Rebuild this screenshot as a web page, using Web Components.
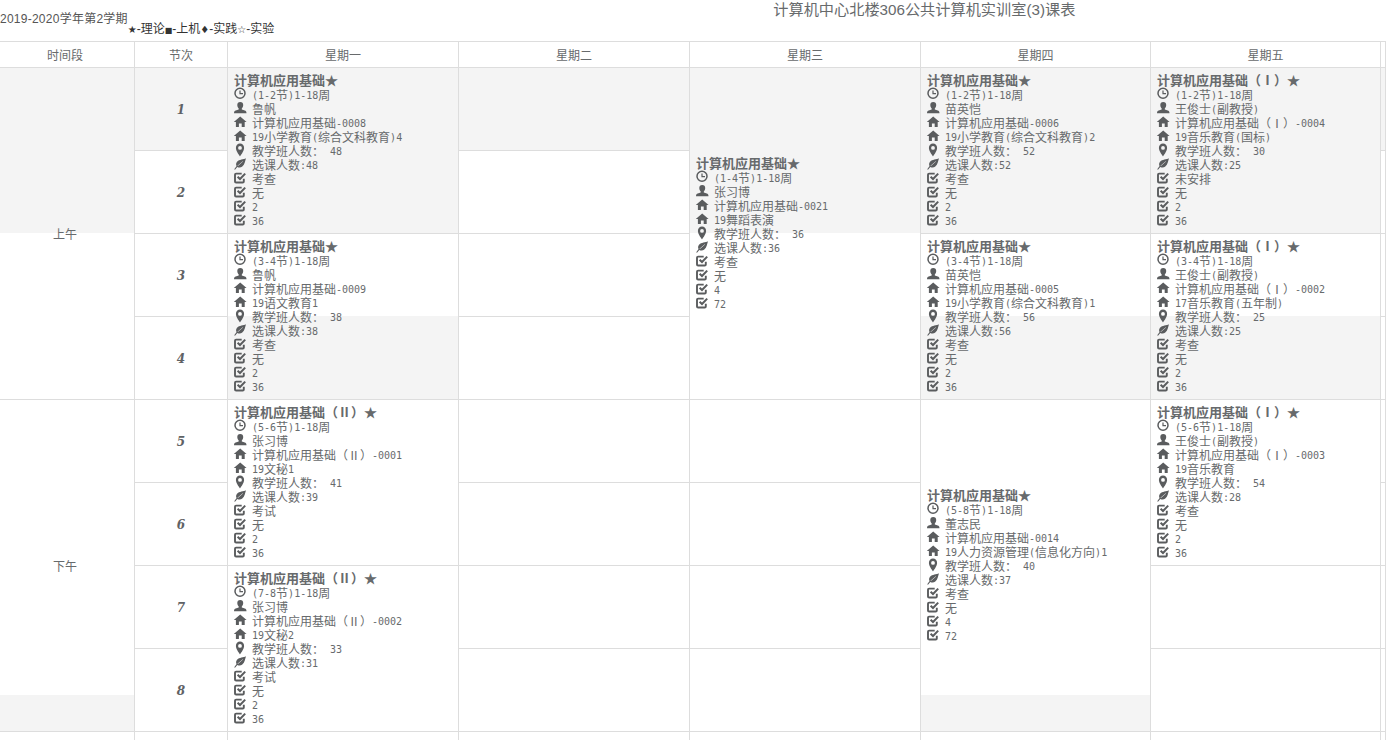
<!DOCTYPE html>
<html lang="zh">
<head>
<meta charset="utf-8">
<title>课表</title>
<style>
  html, body { margin: 0; height: 100%; overflow: hidden; background: #fff; }
</style>
</head>
<body>
<tt-page></tt-page>
<script>
const ICONS = {
  time: `<circle cx="6" cy="5.300" r="5" fill="none" stroke="currentColor" stroke-width="1.500"/><path d="M6 2.400v3.200h3" fill="none" stroke="currentColor" stroke-width="1.200"/>`,
  user: `<path d="M6.200 0c2 0 3 1.300 3 3.100 0 1.400-.6 2.700-1.400 3.400v.9l3 1.200c.9.4 1.700 1 1.700 2.600H0c0-1.600.8-2.200 1.700-2.600l3-1.200v-.9C3.900 5.800 3.300 4.500 3.300 3.100 3.300 1.300 4.300 0 6.200 0z"/>`,
  home: `<path d="M6.200 .4 12.600 6.100H10.700V11H7.700V7.400H4.900V11H1.900V6.100H-.2z"/>`,
  marker: `<path fill-rule="evenodd" d="M6 -.4a4.100 4.100 0 0 0-4.100 4.300C1.900 7.200 6 12.300 6 12.300s4.100-5.100 4.100-8.400A4.100 4.100 0 0 0 6 -.4zm0 6.200a1.900 1.900 0 1 1 0-3.800 1.900 1.900 0 0 1 0 3.800z"/>`,
  leaf: `<path fill-rule="evenodd" d="M12 .2C9.700 1.700 5.200 1 3 3.800 1.800 5.300 1.900 7 2.600 8.100L.2 11.200l.8.6 2.300-2.900c1.400 1 3.500 1 5-.3 2.600-2.300 2.800-5.800 3.700-8.400zM3.500 7.700 8.700 3.300l.3.3L3.900 8.100z"/>`,
  check: `<path d="M9.800 6.800v2.600c0 .7-.4 1.100-1.100 1.100H2.100c-.7 0-1.100-.4-1.100-1.100V2.700c0-.7.400-1.100 1.100-1.100h5.600" fill="none" stroke="currentColor" stroke-width="1.900"/><path d="M3.600 4.700 6 7 11.200 1.600" fill="none" stroke="currentColor" stroke-width="2"/>`
};

class TtIcon extends HTMLElement {
  connectedCallback() {
    this.attachShadow({ mode: "open" }).innerHTML = `
      <style>
        :host { display: block; width: 12px; height: 12px; flex: none; color: #5a5c5e; }
        svg { display: block; width: 12px; height: 12px; fill: currentColor; overflow: visible; }
      </style>
      <svg viewBox="0 0 12 12">${ICONS[this.getAttribute("name")]}</svg>`;
  }
}

// ascii runs go in a narrow mono so that digits take half of a CJK cell
function halfWidth(text) {
  return text.replace(/[\x20-\x7e]+/g, (m) => `<span class="h">${m}</span>`);
}

class TtLine extends HTMLElement {
  connectedCallback() {
    this.attachShadow({ mode: "open" }).innerHTML = `
      <style>
        :host { display: flex; height: 14px; line-height: 14px; font-size: 12px; white-space: nowrap; }
        .t { margin-left: 6px; }
        .h { font: 10px/10px "DejaVu Sans Mono", monospace; white-space: pre; vertical-align: 1px; }
      </style>
      <tt-icon name="${this.getAttribute("icon")}"></tt-icon>
      <span class="t">${halfWidth(this.getAttribute("text"))}</span>`;
  }
}

class TtCourse extends HTMLElement {
  connectedCallback() {
    const c = this.data;
    const lines = [
      ["time", c.time], ["user", c.teacher], ["home", c.code], ["home", c.cls],
      ["marker", `教学班人数： ${c.size}`], ["leaf", `选课人数:${c.picked}`],
      ["check", c.exam], ["check", "无"], ["check", c.credit], ["check", c.hours]
    ];
    this.attachShadow({ mode: "open" }).innerHTML = `
      <style>
        :host { display: block; }
        .name { font-size: 13px; font-weight: 700; line-height: 12px; margin-bottom: 2px; white-space: nowrap; }
      </style>
      <div class="name">${c.name}★</div>
      ${lines.map(([i, t]) => `<tt-line icon="${i}" text="${t}"></tt-line>`).join("")}`;
  }
}

class TtCell extends HTMLElement {
  constructor() {
    super();
    this.attachShadow({ mode: "open" }).innerHTML = `
      <style>
        :host {
          display: flex;
          align-items: center;
          justify-content: var(--justify, center);
          box-sizing: border-box;
          border-right: 1px solid #ddd;
          border-bottom: 1px solid #ddd;
          min-width: 0;
          overflow: visible;
        }
        :host([course]) { justify-content: flex-start; padding-left: 6px; }
        :host([first]) { padding-right: 4px; }
        :host([num]) { font: italic 700 12px "DejaVu Serif", serif; color: #5f6265; padding-top: 2px; }
        :host([open]) { border-bottom: 0; }
      </style>
      <slot></slot>`;
  }
}

const STRIPE = "#f4f4f4";
const TOP_165 = `linear-gradient(${STRIPE} 165px, #fff 165px)`;
const LOW_83 = `linear-gradient(#fff 82px, ${STRIPE} 82px)`;
const LOW_36 = `linear-gradient(#fff calc(100% - 36px), ${STRIPE} calc(100% - 36px))`;

const base = { time: "", exam: "考查", credit: "2", hours: "36" };
const FU = "计算机应用基础";
const FU1 = "计算机应用基础（Ⅰ）";
const FU2 = "计算机应用基础（Ⅱ）";

// col, row, row span, background, course
const COURSES = [
  [3, 1, 2, STRIPE, { name: FU, time: "(1-2节)1-18周", teacher: "鲁帆", code: FU + "-0008", cls: "19小学教育(综合文科教育)4", size: 48, picked: 48 }],
  [3, 3, 2, LOW_83, { name: FU, time: "(3-4节)1-18周", teacher: "鲁帆", code: FU + "-0009", cls: "19语文教育1", size: 38, picked: 38 }],
  [3, 5, 2, "#fff", { name: FU2, time: "(5-6节)1-18周", teacher: "张习博", code: FU2 + "-0001", cls: "19文秘1", size: 41, picked: 39, exam: "考试" }],
  [3, 7, 2, "#fff", { name: FU2, time: "(7-8节)1-18周", teacher: "张习博", code: FU2 + "-0002", cls: "19文秘2", size: 33, picked: 31, exam: "考试" }],
  [5, 1, 4, TOP_165, { name: FU, time: "(1-4节)1-18周", teacher: "张习博", code: FU + "-0021", cls: "19舞蹈表演", size: 36, picked: 36, credit: "4", hours: "72" }],
  [6, 1, 2, STRIPE, { name: FU, time: "(1-2节)1-18周", teacher: "苗英恺", code: FU + "-0006", cls: "19小学教育(综合文科教育)2", size: 52, picked: 52 }],
  [6, 3, 2, LOW_83, { name: FU, time: "(3-4节)1-18周", teacher: "苗英恺", code: FU + "-0005", cls: "19小学教育(综合文科教育)1", size: 56, picked: 56 }],
  [6, 5, 4, LOW_36, { name: FU, time: "(5-8节)1-18周", teacher: "董志民", code: FU + "-0014", cls: "19人力资源管理(信息化方向)1", size: 40, picked: 37, credit: "4", hours: "72" }],
  [7, 1, 2, STRIPE, { name: FU1, time: "(1-2节)1-18周", teacher: "王俊士(副教授)", code: FU1 + "-0004", cls: "19音乐教育(国标)", size: 30, picked: 25, exam: "未安排" }],
  [7, 3, 2, LOW_83, { name: FU1, time: "(3-4节)1-18周", teacher: "王俊士(副教授)", code: FU1 + "-0002", cls: "17音乐教育(五年制)", size: 25, picked: 25 }],
  [7, 5, 2, "#fff", { name: FU1, time: "(5-6节)1-18周", teacher: "王俊士(副教授)", code: FU1 + "-0003", cls: "19音乐教育", size: 54, picked: 28 }]
];

class TtTimetable extends HTMLElement {
  constructor() {
    super();
    this.attachShadow({ mode: "open" }).innerHTML = `
      <style>
        :host {
          display: grid;
          grid-template-columns: 135px 93px 231px 231px 231px 230px 230px 5px;
          grid-template-rows: 26px repeat(8, 83px) 83px;
          border-top: 1px solid #ddd;
          font: 12px/14px "Noto Sans CJK SC", sans-serif;
          color: #676a6c;
        }
      </style>
      <slot></slot>`;
  }

  cell(col, row, span, bg, content) {
    const el = document.createElement("tt-cell");
    el.style.gridArea = `${row} / ${col} / span ${span} / span 1`;
    if (bg) el.style.background = bg;
    if (typeof content === "string") el.textContent = content;
    else if (content) el.append(content);
    this.append(el);
    return el;
  }

  connectedCallback() {
    ["时间段", "节次", "星期一", "星期二", "星期三", "星期四", "星期五", ""].forEach((t, i) => {
      const h = this.cell(i + 1, 1, 1, null, t);
      if (i === 0) h.setAttribute("first", "");
    });

    this.cell(1, 2, 4, TOP_165, "上午").setAttribute("first", "");
    this.cell(1, 6, 4, LOW_36, "下午").setAttribute("first", "");

    for (let n = 1; n <= 8; n++) {
      this.cell(2, n + 1, 1, n === 1 ? STRIPE : null, String(n)).setAttribute("num", "");
    }

    const taken = new Set();
    COURSES.forEach(([col, row, span, bg, data]) => {
      const course = document.createElement("tt-course");
      course.data = { ...base, ...data };
      this.cell(col, row + 1, span, bg, course).setAttribute("course", "");
      for (let r = row; r < row + span; r++) taken.add(`${col}:${r}`);
    });

    // empty periods, and the far right column cut off by the window
    for (let col = 3; col <= 8; col++) {
      for (let n = 1; n <= 8; n++) {
        if (!taken.has(`${col}:${n}`)) {
          this.cell(col, n + 1, 1, n === 1 && (col === 4 || col === 8) ? STRIPE : null);
        }
      }
    }

    // next row, only its column lines are still in the window
    for (let col = 1; col <= 8; col++) {
      this.cell(col, 10, 1, null).setAttribute("open", "");
    }
  }
}

class TtPage extends HTMLElement {
  constructor() {
    super();
    this.attachShadow({ mode: "open" }).innerHTML = `
      <style>
        :host { display: block; width: 1386px; height: 740px; overflow: hidden; }
        .top {
          display: flex;
          align-items: flex-start;
          height: 41px;
          font: 12px/14px "Liberation Sans", "Noto Sans CJK SC", sans-serif;
          white-space: nowrap;
        }
        .term { margin-top: 12px; color: #555; letter-spacing: .25px; }
        .legend { margin-top: 22px; color: #333; }
        .legend b { font: 10px/14px "DejaVu Sans", sans-serif; }
        .legend b.sq { font-size: 8px; }
        h3 {
          margin: 1px 0 0 499px;
          font: 400 15.200px/18px "Liberation Sans", "Noto Sans CJK SC", sans-serif;
          color: #676a6c;
        }
      </style>
      <div class="top">
        <span class="term">2019-2020学年第2学期</span>
        <span class="legend"><b>★</b>-理论<b class="sq">■</b>-上机<b>♦</b>-实践<b>☆</b>-实验</span>
        <h3>计算机中心北楼306公共计算机实训室(3)课表</h3>
      </div>
      <tt-timetable></tt-timetable>`;
  }
}

customElements.define("tt-icon", TtIcon);
customElements.define("tt-line", TtLine);
customElements.define("tt-course", TtCourse);
customElements.define("tt-cell", TtCell);
customElements.define("tt-timetable", TtTimetable);
customElements.define("tt-page", TtPage);
</script>
</body>
</html>
